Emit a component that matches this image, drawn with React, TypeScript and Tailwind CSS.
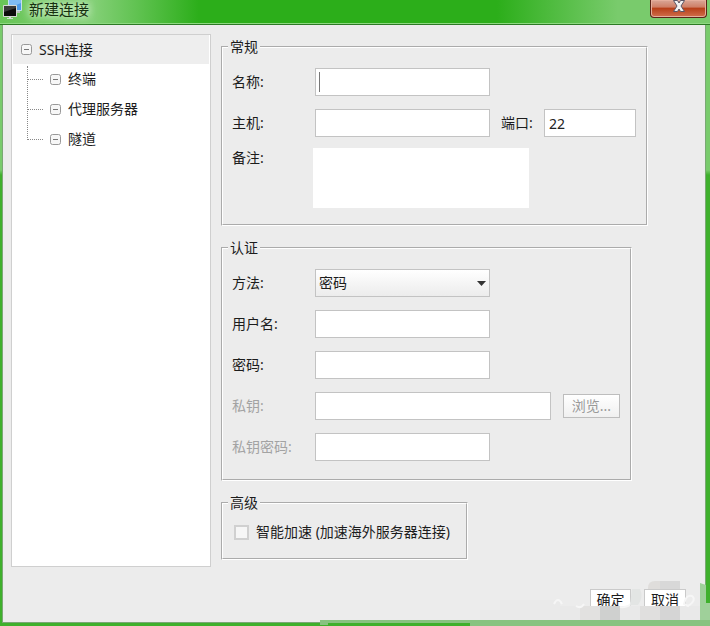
import React, { ReactNode } from "react";

const inputClass =
  "h-7 border border-[#c3c3c3] bg-white px-1 text-sm text-[#222] outline-none";

const treeItems = ["终端", "代理服务器", "隧道"];

const Group = ({ title, children }: { title: string; children: ReactNode }) => (
  <fieldset className="w-fit border-2 border-white [border-style:groove] px-[9px]">
    <legend className="-ml-1 px-[2px] leading-5">{title}</legend>
    {children}
  </fieldset>
);

const Row = ({
  id,
  label,
  disabled,
  children,
}: {
  id: string;
  label: string;
  disabled?: boolean;
  children: ReactNode;
}) => (
  <div className="flex items-center">
    <label
      htmlFor={id}
      className={`w-[83px] shrink-0 ${disabled ? "text-[#a3a3a3]" : ""}`}
    >
      {label}
    </label>
    {children}
  </div>
);

const Toggle = () => (
  <svg width="11" height="11" viewBox="0 0 11 11" fill="none" className="shrink-0">
    <rect x="0.5" y="0.5" width="10" height="10" rx="2" fill="#f7f7f7" stroke="#999" />
    <path d="M3 5.5h5" stroke="#777" />
  </svg>
);

const AppIcon = () => (
  <svg width="20" height="20" viewBox="0 0 20 20" className="shrink-0">
    <rect x="6" y="-1" width="14" height="12" rx="1" fill="#c4e0ee" />
    <rect x="7" y="0" width="12" height="10" fill="#4d9bea" />
    <path d="M7 0h12v3L7 8z" fill="#7fbcf5" />
    <path d="M15 11h3v2h-3z" fill="#b9c4bb" />
    <rect x="1" y="5" width="14" height="12" rx="1" fill="#d4d8d4" />
    <rect x="2" y="6" width="12" height="10" fill="#0c0c0c" />
    <path d="M2 6h12v2L2 12z" fill="#3a3a3a" />
    <path d="M7 17h2v1h2v1H5v-1h2z" fill="#d5dcd5" />
  </svg>
);

const TitleBar = () => (
  <header className="flex h-[25px] items-start justify-between border-b border-[#2c7a24] bg-[linear-gradient(90deg,#68c557_0%,#84d077_13%,#62c353_19%,#2cae1a_28%,#2cae1a_70%,#79cb6c_87%,#79cb6c_100%)] pl-[2px] pr-[3px] shadow-[inset_0_-1px_0_#8ed882]">
    <div className="flex items-start gap-[7px]">
      <AppIcon />
      <h1 className="text-[15px] leading-[18px] text-[#16300f] [text-shadow:0_0_8px_#ffffff,0_0_12px_#c8efc0]">
        新建连接
      </h1>
    </div>
    <button
      type="button"
      aria-label="关闭"
      className="flex h-[18px] w-[57px] items-start justify-center rounded-b border border-t-0 border-[#5b2418] bg-[linear-gradient(180deg,#d9a797_0%,#cf8068_40%,#b8401a_50%,#d0704c_100%)] shadow-[inset_0_0_0_1px_#e5ae9c]"
    >
      <svg width="14" height="13" viewBox="0 0 14 13">
        <path
          d="M1.5 0.5h4l1.500 2.500 1.500-2.500h4l-3.500 5.500 3.500 5.500h-4l-1.500-2.500-1.500 2.500h-4l3.500-5.500z"
          fill="#f2f2f2"
          stroke="#5a5565"
        />
      </svg>
    </button>
  </header>
);

const Tree = () => (
  <nav className="w-[200px] shrink-0 border border-[#cfcfcf] bg-white p-px pt-0">
    <div className="flex h-[29px] items-center gap-[7px] bg-[#eee] pl-2">
      <Toggle />
      SSH连接
    </div>
    <ul className="relative">
      <li
        aria-hidden
        className="absolute left-[14px] top-[2px] h-[74px] border-l border-dotted border-[#888]"
      />
      {treeItems.map((item) => (
        <li key={item} className="flex h-[30px] items-center pl-[15px]">
          <span className="mr-[7px] w-[15px] border-t border-dotted border-[#888]" />
          <Toggle />
          <span className="ml-[7px]">{item}</span>
        </li>
      ))}
    </ul>
  </nav>
);

const General = () => (
  <Group title="常规">
    <div className="flex flex-col gap-[13px] pb-4 pt-[11px]">
      <Row id="name" label="名称:">
        <div className="relative">
          <input id="name" className={`${inputClass} w-[175px]`} />
          <span className="pointer-events-none absolute left-1 top-1 h-5 border-l border-[#777]" />
        </div>
      </Row>
      <div className="flex items-center">
        <Row id="host" label="主机:">
          <input id="host" className={`${inputClass} w-[175px]`} />
        </Row>
        <label htmlFor="port" className="ml-[11px] w-[43px]">
          端口:
        </label>
        <input
          id="port"
          defaultValue="22"
          className={`${inputClass} mr-px w-[92px]`}
        />
      </div>
      <div className="-mt-[2px] flex items-start">
        <label htmlFor="remark" className="w-[81px]">
          备注:
        </label>
        <textarea
          id="remark"
          className="h-[60px] w-[216px] resize-none bg-white p-1 outline-none"
        />
      </div>
    </div>
  </Group>
);

const Auth = () => (
  <Group title="认证">
    <div className="flex flex-col gap-[13px] pb-[18px] pt-[11px]">
      <Row id="method" label="方法:">
        <div className="relative">
          <select
            id="method"
            className="h-7 w-[175px] appearance-none border border-[#c3c3c3] bg-linear-to-b from-white to-[#ececec] px-[3px] text-sm outline-none"
          >
            <option>密码</option>
          </select>
          <svg
            width="9"
            height="5"
            viewBox="0 0 9 5"
            className="pointer-events-none absolute right-1 top-3"
          >
            <path d="M0 0h9L4.500 5z" fill="#333" />
          </svg>
        </div>
      </Row>
      <Row id="user" label="用户名:">
        <input id="user" className={`${inputClass} w-[175px]`} />
      </Row>
      <Row id="password" label="密码:">
        <input
          id="password"
          type="password"
          className={`${inputClass} w-[175px]`}
        />
      </Row>
      <Row id="key" label="私钥:" disabled>
        <input id="key" disabled className={`${inputClass} w-[236px]`} />
        <button
          type="button"
          disabled
          className="ml-3 mr-px h-6 w-[57px] border border-[#bdbdbd] bg-linear-to-b from-white to-[#f0f0f0] leading-5 text-[#999]"
        >
          浏览...
        </button>
      </Row>
      <Row id="keypass" label="私钥密码:" disabled>
        <input
          id="keypass"
          type="password"
          disabled
          className={`${inputClass} w-[175px]`}
        />
      </Row>
    </div>
  </Group>
);

const Advanced = () => (
  <Group title="高级">
    <label className="flex items-center gap-[7px] pb-4 pl-[2px] pr-[7px] pt-[9px]">
      <input
        type="checkbox"
        className="size-[15px] appearance-none border-2 border-[#d0d0d0] bg-[#f6f6f6] checked:bg-[#888]"
      />
      智能加速 (加速海外服务器连接)
    </label>
  </Group>
);

// soft blocks lying over the lower right corner of the window
const CornerBlocks = () => (
  <svg
    width="390"
    height="46"
    viewBox="0 0 390 46"
    className="pointer-events-none absolute bottom-0 right-0"
  >
    <path d="M0 40h390v6H150v-1H0z" fill="#88c380" />
    <path d="M8 43h142v3H0v-1h8z" fill="#3fb02c" />
    <path d="M180 20h60v20h-80v-10h20z" fill="#eaeaea" />
    <path d="M240 26h150v14H240z" fill="#e9e9e9" />
    <path d="M260 26h20v14h-20z" fill="#e2e1e0" />
    <path d="M280 26h20v14h-20z" fill="#cfd0cf" />
    <path d="M320 26h20v14h-20z" fill="#e0dfde" />
    <path d="M340 26h20v14h-20z" fill="#d5d5d5" />
    <path d="M328 8q0-7 7-7h5v8h-12z" fill="#dfdddb" />
    <path d="M340 1h20v8h-20z" fill="#d8d8d8" />
    <path
      d="M234 24q4-8 8 0M256 26q5 3 8-2M312 22q-3 6-12 5M364 24q2-10 8-8 5 4-4 10z"
      fill="none"
      stroke="#f6f6f6"
      strokeWidth="2"
    />
    <path d="M312 9h8q4 8-2 16h-8z" fill="#e3e5e4" />
    <path d="M380 3l6 2v18h4v17h-10z" fill="#9fd09a" />
  </svg>
);

export default function App() {
  return (
    <div className="relative flex min-h-screen flex-col bg-[linear-gradient(180deg,#79cb6c_0,#79cb6c_170px,#3fb02c_175px)] font-['Noto_Sans','Noto_Sans_CJK_SC',sans-serif] text-sm leading-5 text-[#1c1c1c]">
      <TitleBar />
      <main className="mb-[3px] ml-[2px] mr-1 flex flex-1 flex-col border border-t-0 border-[#7aa874] bg-[#ececec] pl-2 pr-[19px] pt-[9px]">
        <div className="flex gap-[10px]">
          <Tree />
          <form className="flex min-w-0 flex-1 flex-col gap-3 pb-[7px] pt-[3px]">
            <General />
            <Auth />
            <Advanced />
          </form>
        </div>
        <div className="mt-[22px] flex justify-end gap-[13px]">
          <button
            type="button"
            className="h-5 w-[41px] border border-[#cacaca] bg-white leading-5"
          >
            确定
          </button>
          <button
            type="button"
            className="h-5 w-[42px] border border-[#cacaca] bg-white leading-5"
          >
            取消
          </button>
        </div>
      </main>
      <CornerBlocks />
    </div>
  );
}
